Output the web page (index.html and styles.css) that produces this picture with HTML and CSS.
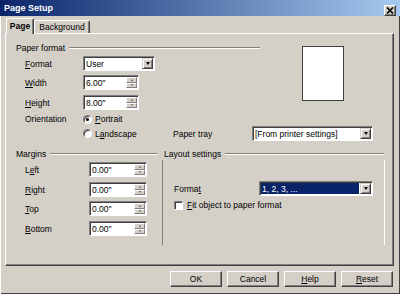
FILE: index.html
```html
<!DOCTYPE html>
<html>
<head>
<meta charset="utf-8">
<link rel="stylesheet" href="styles.css">
</head>
<body>
<div class="window">
  <div class="titlebar">
    <span class="title">Page Setup</span>
    <span class="close"><svg width="8" height="7" viewBox="0 0 8 7"><path d="M1 0.5 L7 6.5 M7 0.5 L1 6.5" stroke="#000" stroke-width="1.6"/></svg></span>
  </div>
  <div class="tabs">
    <div class="tab active">Page</div>
    <div class="tab bgtab">Background</div>
  </div>
  <div class="panel">
    <div class="top">
      <div class="pf">
        <div class="heading"><span>Paper format</span><i class="rule"></i></div>
        <div class="row mt3"><span class="lbl"><u>F</u>ormat</span>
          <div class="combo c-user"><span class="val">User</span><span class="drop"><i class="tri"></i></span></div>
        </div>
        <div class="row mt4"><span class="lbl"><u>W</u>idth</span>
          <div class="spin s-pf"><span class="val">6.00"</span><span class="arrows"><span><i class="up"></i></span><span><i class="dn"></i></span></span></div>
        </div>
        <div class="row mt5"><span class="lbl"><u>H</u>eight</span>
          <div class="spin s-pf"><span class="val">8.00"</span><span class="arrows"><span><i class="up"></i></span><span><i class="dn"></i></span></span></div>
        </div>
      </div>
      <div class="preview"></div>
    </div>
    <div class="row orient1"><span class="lbl">Orientation</span>
      <span class="opt"><span class="radio checked"></span><span><u>P</u>ortrait</span></span>
    </div>
    <div class="row orient2">
      <span class="opt land"><span class="radio"></span><span>L<u>a</u>ndscape</span></span>
      <span class="tray-lbl">Paper tray</span>
      <div class="combo c-tray"><span class="val">[From printer settings]</span><span class="drop"><i class="tri"></i></span></div>
    </div>
    <div class="bottom">
      <div class="margins">
        <div class="heading"><span>Margins</span><i class="rule"></i></div>
        <div class="row mt3"><span class="mlbl">L<u>e</u>ft</span>
          <div class="spin s-m"><span class="val">0.00"</span><span class="arrows"><span><i class="up"></i></span><span><i class="dn"></i></span></span></div>
        </div>
        <div class="row mt5"><span class="mlbl"><u>R</u>ight</span>
          <div class="spin s-m"><span class="val">0.00"</span><span class="arrows"><span><i class="up"></i></span><span><i class="dn"></i></span></span></div>
        </div>
        <div class="row mt4"><span class="mlbl"><u>T</u>op</span>
          <div class="spin s-m"><span class="val">0.00"</span><span class="arrows"><span><i class="up"></i></span><span><i class="dn"></i></span></span></div>
        </div>
        <div class="row mt5"><span class="mlbl"><u>B</u>ottom</span>
          <div class="spin s-m"><span class="val">0.00"</span><span class="arrows"><span><i class="up"></i></span><span><i class="dn"></i></span></span></div>
        </div>
      </div>
      <div class="layout">
        <div class="heading lh"><span>Layout settings</span><i class="rule"></i></div>
        <div class="lbody">
          <div class="row lformat"><span class="llbl">Forma<u>t</u></span>
            <div class="combo c-num"><span class="val sel">1, 2, 3, ...</span><span class="drop"><i class="tri"></i></span></div>
          </div>
          <div class="row chkrow"><span class="chk"></span><span><u>F</u>it object to paper format</span></div>
        </div>
      </div>
    </div>
  </div>
  <div class="buttons">
    <div class="btn">OK</div>
    <div class="btn">Cancel</div>
    <div class="btn"><u>H</u>elp</div>
    <div class="btn"><u>R</u>eset</div>
  </div>
</div>
</body>
</html>
```

FILE: styles.css
```css
* { box-sizing: border-box; }
body {
  margin: 0;
  font-family: "Liberation Sans", Arial, sans-serif;
  font-size: 8.5px;
  color: #000;
  background: #d4d0c8;
}
u { text-underline-offset: 1px; }
.window {
  width: 400px;
  height: 294px;
  background: #d4d0c8;
  box-shadow: inset 1px 0 #fff, inset -1px -1px #404040;
  overflow: hidden;
  display: flex;
  flex-direction: column;
}
.titlebar {
  flex: none;
  height: 16px;
  background: linear-gradient(to right, #0a246a, #a6caf0);
  display: flex;
  align-items: center;
  justify-content: space-between;
  padding: 0 4px 0 4px;
}
.title { color: #fff; font-weight: bold; font-size: 9px; }
.close {
  width: 12px;
  height: 11px;
  margin-top: 4px;
  background: #d4d0c8;
  border: 1px solid;
  border-color: #fff #404040 #404040 #fff;
  box-shadow: inset -1px -1px #808080;
  display: flex;
  align-items: center;
  justify-content: center;
}
.close svg { display: block; }
.tabs {
  flex: none;
  height: 17px;
  display: flex;
  align-items: flex-end;
  padding-left: 6px;
  position: relative;
  z-index: 1;
}
.tab {
  height: 13px;
  background: #d4d0c8;
  border-top: 1px solid #fff;
  border-left: 1px solid #fff;
  border-right: 1px solid #404040;
  box-shadow: inset -1px 0 #808080;
  border-radius: 2px 2px 0 0;
  display: flex;
  align-items: center;
  justify-content: center;
}
.tab.active { width: 28px; height: 16px; margin-bottom: -1px; font-weight: bold; padding-bottom: 2px; }
.tab.bgtab { width: 56px; }
.panel {
  flex: none;
  margin-left: 5px;
  width: 389px;
  height: 233px;
  border: 1px solid;
  border-color: #fff #404040 #404040 #fff;
  box-shadow: inset -1px -1px #808080;
  padding: 8px 0 0 10px;
}
.heading { display: flex; align-items: center; height: 11px; }
.heading .rule {
  flex: 1;
  height: 2px;
  border-top: 1px solid #808080;
  border-bottom: 1px solid #fff;
  margin-left: 4px;
}
.row { display: flex; align-items: center; height: 15px; }
.mt3 { margin-top: 3px; }
.mt4 { margin-top: 4px; }
.mt5 { margin-top: 5px; }
.top { display: flex; align-items: flex-start; }
.pf { width: 244px; }
.lbl { margin-left: 9px; width: 58px; }
.mlbl { margin-left: 9px; width: 64px; }
.preview {
  margin-left: 42px;
  margin-top: 4px;
  width: 42px;
  height: 55px;
  background: #fff;
  border: 1px solid #404040;
}
.combo, .spin {
  height: 15px;
  background: #fff;
  border: 1px solid;
  border-color: #808080 #fff #fff #808080;
  box-shadow: inset 1px 1px #404040;
  padding: 1px;
  display: flex;
  align-items: stretch;
}
.combo .val, .spin .val {
  flex: 1;
  display: flex;
  align-items: center;
  padding-left: 1px;
  white-space: nowrap;
  overflow: hidden;
}
.val.sel { background: #0a246a; color: #fff; margin-right: 1px; }
.drop {
  width: 11px;
  background: #d4d0c8;
  border: 1px solid;
  border-color: #d4d0c8 #404040 #404040 #d4d0c8;
  box-shadow: inset 1px 1px #fff, inset -1px -1px #808080;
  display: flex;
  align-items: center;
  justify-content: center;
}
.tri {
  width: 0; height: 0;
  border-left: 2.5px solid transparent;
  border-right: 2.5px solid transparent;
  border-top: 3px solid #000;
}
.arrows { width: 11px; display: flex; flex-direction: column; }
.arrows > span {
  flex: 1;
  background: #d4d0c8;
  border: 1px solid;
  border-color: #fff #808080 #808080 #fff;
  display: flex;
  align-items: center;
  justify-content: center;
}
.up {
  width: 0; height: 0;
  border-left: 1.5px solid transparent;
  border-right: 1.5px solid transparent;
  border-bottom: 2px solid #555;
}
.dn {
  width: 0; height: 0;
  border-left: 1.5px solid transparent;
  border-right: 1.5px solid transparent;
  border-top: 2px solid #555;
}
.c-user { width: 72px; }
.c-tray { width: 121px; }
.c-num { width: 114px; }
.s-pf { width: 56px; }
.s-m { width: 58px; }
.orient1 { margin-top: 2px; height: 14px; }
.opt { display: flex; align-items: center; gap: 3px; }
.radio {
  width: 9px;
  height: 9px;
  border-radius: 50%;
  background: #fff;
  border: 1px solid;
  border-color: #808080 #fff #fff #808080;
  box-shadow: inset 1px 1px #404040;
  display: flex;
  align-items: center;
  justify-content: center;
}
.radio.checked::after {
  content: "";
  width: 3px;
  height: 3px;
  border-radius: 50%;
  background: #000;
}
.orient2 { margin-top: 0; }
.land { margin-left: 67px; width: 90px; }
.tray-lbl { width: 79px; }
.bottom { display: flex; margin-top: 7px; }
.margins { width: 141px; }
.layout { width: 222px; margin-left: 5px; }
.lh { padding-left: 2px; }
.lbody {
  margin-top: 1px;
  height: 85px;
  border-left: 1px solid #808080;
  box-shadow: 1px 0 0 #fff;
  padding: 21px 0 0 11px;
}
.llbl { width: 85px; }
.chkrow { margin-top: 4px; height: 10px; gap: 4px; }
.chk {
  width: 9px;
  height: 9px;
  background: #fff;
  border: 1px solid;
  border-color: #808080 #fff #fff #808080;
  box-shadow: inset 1px 1px #404040;
}
.buttons {
  flex: none;
  display: flex;
  justify-content: flex-end;
  gap: 5px;
  padding-right: 7px;
  margin-top: 5px;
}
.btn {
  width: 52px;
  height: 16px;
  border: 1px solid;
  border-color: #fff #404040 #404040 #fff;
  box-shadow: inset -1px -1px #808080;
  display: flex;
  align-items: center;
  justify-content: center;
}
```
